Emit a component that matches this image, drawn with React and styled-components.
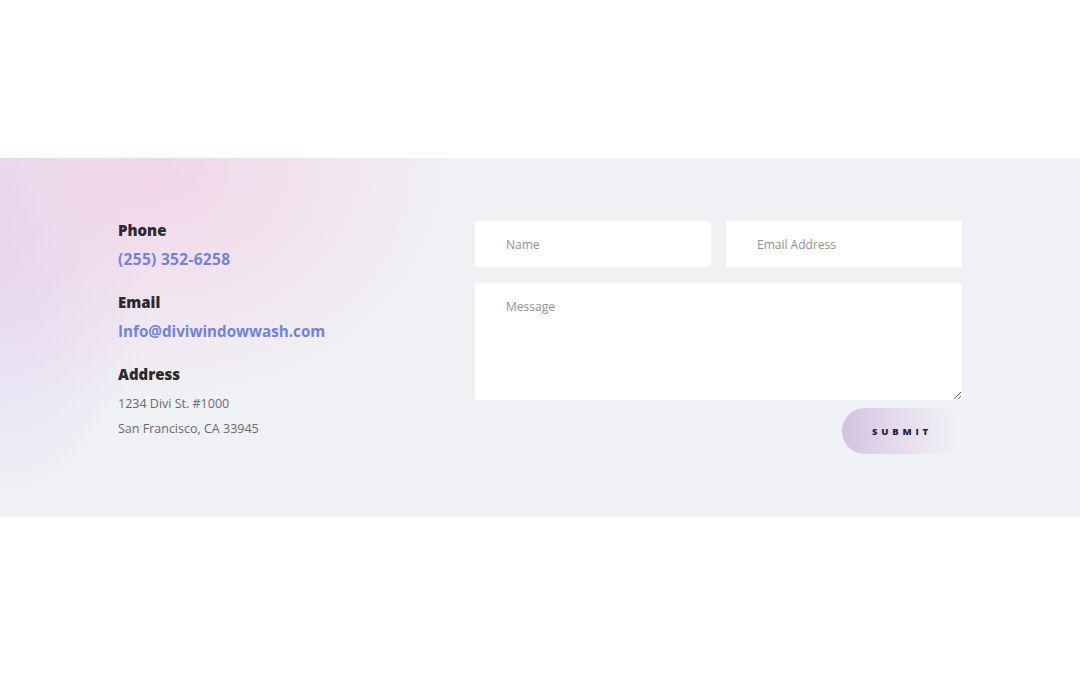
import React from "react";
import styled, { createGlobalStyle } from "styled-components";

const Global = createGlobalStyle`
  html, body { margin: 0; padding: 0; background: #ffffff; }
  body { font-family: "Open Sans", "Noto Sans", sans-serif; }
  * { box-sizing: border-box; }
`;

const Page = styled.div`
  width: 1080px;
  height: 675px;
  padding-top: 158px;
  background: #ffffff;
`;

const Section = styled.section`
  height: 359px;
  display: flex;
  padding: 62px 118px 0 118px;
  background:
    radial-gradient(ellipse 300px 240px at 160px 10px, rgba(242, 212, 230, 0.95), rgba(242, 212, 230, 0) 100%),
    radial-gradient(ellipse 160px 280px at 0px 70px, rgba(226, 212, 242, 1), rgba(226, 212, 242, 0) 100%),
    #f0f1f5;
`;

const InfoColumn = styled.div`
  width: 357px;
  flex: none;
  display: flex;
  flex-direction: column;
  gap: 23px;
`;

const InfoBlock = styled.div`
  display: flex;
  flex-direction: column;
`;

const Label = styled.h4`
  margin: 0 0 ${(p) => (p.$tight ? "7px" : "9px")};
  font-family: "Open Sans", sans-serif;
  font-weight: 800;
  font-size: 15px;
  line-height: 20px;
  color: #2a2a30;
`;

const LinkValue = styled.a`
  font-family: "Open Sans", sans-serif;
  font-weight: 700;
  font-size: ${(p) => (p.$wide ? "15.5px" : "15.2px")};
  letter-spacing: ${(p) => (p.$wide ? "0.3px" : "0")};
  line-height: 20px;
  color: #7083dc;
  text-decoration: none;
`;

const TextLine = styled.span`
  font-family: "Open Sans", sans-serif;
  font-size: 12.5px;
  line-height: 25px;
  color: #6a6a72;
`;

const Form = styled.form`
  width: 487px;
  margin-top: 1px;
  display: flex;
  flex-direction: column;
`;

const Row = styled.div`
  display: grid;
  grid-template-columns: 1fr 1fr;
  gap: 15px;
  margin-bottom: 16px;
`;

const Input = styled.input`
  height: 46px;
  border: none;
  border-radius: 3px;
  background: #ffffff;
  padding: 0 31px;
  font-family: "Open Sans", sans-serif;
  font-size: 12px;
  color: #333;
  outline: none;
  &::placeholder { color: #8f8f96; }
`;

const TextArea = styled.textarea`
  height: 117px;
  border: none;
  border-radius: 3px;
  background: #ffffff;
  padding: 17px 31px;
  font-family: "Open Sans", sans-serif;
  font-size: 12px;
  line-height: 14px;
  color: #333;
  outline: none;
  resize: vertical;
  &::placeholder { color: #8f8f96; }
`;

const Actions = styled.div`
  display: flex;
  justify-content: flex-end;
  margin-top: 8px;
  padding-right: 2px;
`;

const SubmitButton = styled.button`
  width: 118px;
  height: 46px;
  border: none;
  border-radius: 23px;
  background: linear-gradient(90deg, #d4c1e2 0%, #e6dcee 50%, #f2f1f6 100%);
  font-family: "Open Sans", sans-serif;
  font-weight: 800;
  font-size: 9.5px;
  letter-spacing: 3.8px;
  padding-left: 8px;
  color: #2b2438;
  cursor: pointer;
`;

export default function App() {
  return (
    <>
      <Global />
      <Page>
        <Section>
          <InfoColumn>
            <InfoBlock>
              <Label>Phone</Label>
              <LinkValue href="#" $wide>(255) 352-6258</LinkValue>
            </InfoBlock>
            <InfoBlock>
              <Label>Email</Label>
              <LinkValue href="#">Info@diviwindowwash.com</LinkValue>
            </InfoBlock>
            <InfoBlock>
              <Label $tight>Address</Label>
              <TextLine>1234 Divi St. #1000</TextLine>
              <TextLine>San Francisco, CA 33945</TextLine>
            </InfoBlock>
          </InfoColumn>
          <Form onSubmit={(e) => e.preventDefault()}>
            <Row>
              <Input placeholder="Name" />
              <Input placeholder="Email Address" />
            </Row>
            <TextArea placeholder="Message" />
            <Actions>
              <SubmitButton type="submit">SUBMIT</SubmitButton>
            </Actions>
          </Form>
        </Section>
      </Page>
    </>
  );
}
